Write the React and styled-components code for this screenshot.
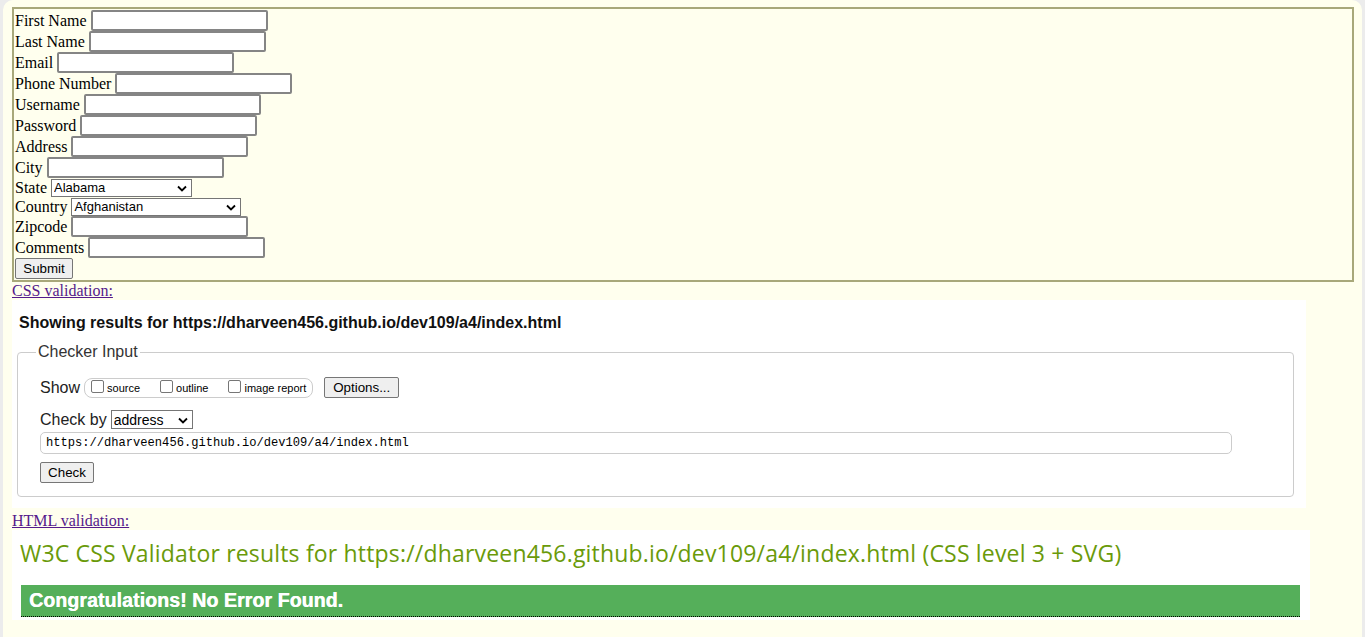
import React from "react";
import styled, { createGlobalStyle } from "styled-components";

const GlobalStyle = createGlobalStyle`
  html {
    background: #ececec;
  }
  body {
    margin: 0;
  }
`;

const Page = styled.div`
  margin: 0 3px;
  min-height: 637px;
  box-sizing: border-box;
  padding: 7px 8px 0 9px;
  background: #ffffee;
  border-radius: 10px 10px 0 0;
  font-family: "Liberation Serif", "Times New Roman", serif;
  font-size: 16px;
  color: #000;
`;

const Form = styled.form`
  border: 2px solid #a8a87a;
  padding: 1px 1px 1px;
`;

const Row = styled.div`
  display: flex;
  align-items: center;
  gap: 4px;
  height: ${(p) => p.$h || 21}px;
  white-space: nowrap;
`;

const TextInput = styled.input`
  box-sizing: border-box;
  width: 177px;
  height: 21px;
  margin: 0;
  border: 2px solid #858585;
  border-radius: 2px;
  background: #fff;
`;

const SelectWrap = styled.span`
  position: relative;
  display: inline-block;
`;

const Select = styled.select`
  appearance: none;
  box-sizing: border-box;
  width: ${(p) => p.$w}px;
  height: ${(p) => p.$ht || 18}px;
  margin: 0;
  padding: 0 0 0 2px;
  border: 1px solid #767676;
  border-radius: 0;
  background: #fff;
  font-family: "Liberation Sans", Arial, sans-serif;
  font-size: ${(p) => p.$fs || 13}px;
  color: #000;
`;

const Chevron = styled.svg`
  position: absolute;
  right: 5px;
  top: 50%;
  width: 10px;
  height: 7px;
  margin-top: -3px;
  pointer-events: none;
`;

const Button = styled.button`
  box-sizing: border-box;
  width: ${(p) => p.$w}px;
  height: 21px;
  margin: ${(p) => p.$mt || 0}px 0 0 ${(p) => p.$ml || 0}px;
  padding: 0;
  background: #efefef;
  border: 1px solid #767676;
  border-radius: 2px;
  font-family: "Liberation Sans", Arial, sans-serif;
  font-size: 13.33px;
  color: #000;
`;

const Link = styled.a`
  display: block;
  width: max-content;
  line-height: 18px;
  margin-top: ${(p) => p.$mt || 0}px;
  color: #551a8b;
  text-decoration: underline;
`;

const ResultCard = styled.div`
  display: flow-root;
  width: ${(p) => p.$w}px;
  background: #fff;
  box-sizing: border-box;
  font-family: "Liberation Sans", Arial, sans-serif;
`;

const Heading = styled.div`
  padding: 14px 0 0 7px;
  font-size: 16px;
  font-weight: bold;
  line-height: 18px;
  color: #111;
`;

const Fieldset = styled.fieldset`
  margin: 11px 12px 11px 5px;
  padding: 0 22px 13px;
  border: 1px solid #cccccc;
  border-radius: 4px;
  display: flex;
  flex-direction: column;
  align-items: flex-start;
`;

const Legend = styled.legend`
  margin-left: -4px;
  padding: 0 2px;
  font-size: 16px;
  line-height: 18px;
  color: #333;
`;

const FieldRow = styled.div`
  display: flex;
  align-items: center;
  gap: 4px;
  height: ${(p) => p.$h || 21}px;
  margin-top: ${(p) => p.$mt || 0}px;
  font-size: 16px;
  color: #222;
`;

const CheckGroup = styled.div`
  display: flex;
  align-items: center;
  gap: 20px;
  box-sizing: border-box;
  height: 20px;
  padding: 0 6px;
  border: 1px solid #cccccc;
  border-radius: 8px;
`;

const CheckItem = styled.label`
  display: flex;
  align-items: center;
  gap: 3px;
  font-size: 11px;
  color: #000;
`;

const Box = styled.input`
  appearance: none;
  box-sizing: border-box;
  width: 13px;
  height: 13px;
  margin: 0 0 2px;
  border: 1px solid #767676;
  border-radius: 2px;
  background: #fff;
`;

const UrlInput = styled.input`
  box-sizing: border-box;
  width: 1192px;
  height: 22px;
  margin-top: 2px;
  padding: 0 5px;
  border: 1px solid #cccccc;
  border-radius: 5px;
  font-family: "Liberation Mono", "Courier New", monospace;
  font-size: 12.1px;
  color: #000;
  background: #fff;
`;

const Title = styled.div`
  padding: 8px 0 0 8px;
  font-family: "Open Sans", sans-serif;
  font-size: 23px;
  letter-spacing: 0.18px;
  line-height: 30px;
  color: #6a9a0a;
  white-space: nowrap;
`;

const Success = styled.div`
  box-sizing: border-box;
  width: 1279px;
  height: 32px;
  margin: 17px 0 0 9px;
  padding-left: 8px;
  display: flex;
  align-items: center;
  background: #55af5a;
  border-bottom: 1px dotted #000;
  font-family: "Liberation Sans", Arial, sans-serif;
  font-size: 19.5px;
  font-weight: bold;
  letter-spacing: 0.1px;
  color: #fff;
  text-shadow: 0.4px 0 0 #fff;
`;

const CardBottom = styled.div`
  height: 3px;
`;

const ChevronIcon = () => (
  <Chevron viewBox="0 0 10 7">
    <path d="M1 1.5 L5 5.5 L9 1.5" fill="none" stroke="#000" strokeWidth="1.8" />
  </Chevron>
);

const textFields = [
  "First Name",
  "Last Name",
  "Email",
  "Phone Number",
  "Username",
  "Password",
  "Address",
  "City",
];

const url = "https://dharveen456.github.io/dev109/a4/index.html";

export default function App() {
  return (
    <>
      <GlobalStyle />
      <Page>
        <Form onSubmit={(e) => e.preventDefault()}>
          {textFields.map((f) => (
            <Row key={f}>
              {f}
              <TextInput type={f === "Password" ? "password" : "text"} />
            </Row>
          ))}
          <Row $h={19}>
            State
            <SelectWrap>
              <Select $w={141}>
                <option>Alabama</option>
              </Select>
              <ChevronIcon />
            </SelectWrap>
          </Row>
          <Row $h={19}>
            Country
            <SelectWrap>
              <Select $w={170}>
                <option>Afghanistan</option>
              </Select>
              <ChevronIcon />
            </SelectWrap>
          </Row>
          <Row>
            Zipcode
            <TextInput />
          </Row>
          <Row>
            Comments
            <TextInput />
          </Row>
          <Row>
            <Button $w={58}>Submit</Button>
          </Row>
        </Form>

        <Link href="#">CSS validation:</Link>
        <ResultCard $w={1294}>
          <Heading>Showing results for {url}</Heading>
          <Fieldset>
            <Legend>Checker Input</Legend>
            <FieldRow $mt={16}>
              Show
              <CheckGroup>
                <CheckItem>
                  <Box type="checkbox" />
                  source
                </CheckItem>
                <CheckItem>
                  <Box type="checkbox" />
                  outline
                </CheckItem>
                <CheckItem>
                  <Box type="checkbox" />
                  image report
                </CheckItem>
              </CheckGroup>
              <Button $w={75} $ml={7}>
                Options...
              </Button>
            </FieldRow>
            <FieldRow $mt={11}>
              Check by
              <SelectWrap>
                <Select $w={82} $ht={19} $fs={14}>
                  <option>address</option>
                </Select>
                <ChevronIcon />
              </SelectWrap>
            </FieldRow>
            <UrlInput defaultValue={url} />
            <Button $w={54} $mt={8}>
              Check
            </Button>
          </Fieldset>
        </ResultCard>

        <Link href="#" $mt={4}>
          HTML validation:
        </Link>
        <ResultCard $w={1298}>
          <Title>
            W3C CSS Validator results for {url} (CSS level 3 + SVG)
          </Title>
          <Success>Congratulations! No Error Found.</Success>
          <CardBottom />
        </ResultCard>
      </Page>
    </>
  );
}
